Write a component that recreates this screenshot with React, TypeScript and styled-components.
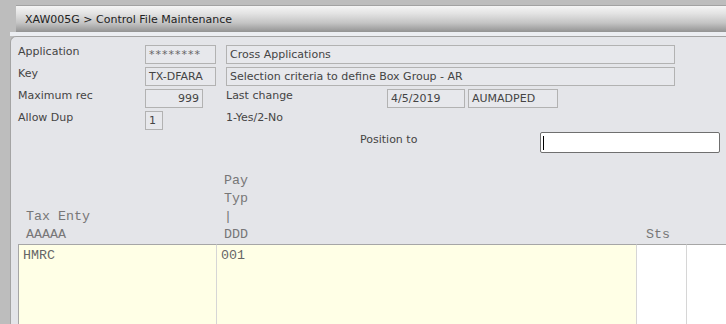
import styled, { createGlobalStyle } from "styled-components";

const GlobalStyle = createGlobalStyle`
  html, body {
    margin: 0;
    padding: 0;
    background: #bdbdbd;
    overflow: hidden;
  }
  body {
    font-family: "DejaVu Sans", Verdana, sans-serif;
    font-size: 11px;
    color: #444;
  }
`;

const Page = styled.div`
  width: 780px;
  padding: 5px 0 0 10px;
`;

const TitleWrap = styled.div`
  padding-left: 6px;
`;

const TitleBar = styled.div`
  height: 26px;
  border-top: 1px solid #a2a2a2;
  background: linear-gradient(to bottom, #f5f5f5 0%, #e2e2e2 30%, #c4c4c4 65%, #939393 100%);
  display: flex;
  align-items: center;
  padding-left: 9px;
  color: #222;
  font-size: 11px;
`;

const Strip = styled.div`
  height: 4px;
  background: #eceef2;
`;

const Panel = styled.div`
  background: #e4e5e9;
  border-top: 1px solid #a4a4a4;
  border-left: 1px solid #a4a4a4;
  border-top-left-radius: 6px;
  padding: 8px 0 0 7px;
`;

const Form = styled.div`
  display: grid;
  grid-template-columns: 127px 81px 1fr;
  grid-auto-rows: 22px;
`;

const Label = styled.div`
  line-height: 14px;
  color: #444;
  white-space: nowrap;
`;

const Box = styled.div<{ $w: number; $right?: boolean; $muted?: boolean }>`
  box-sizing: border-box;
  width: ${(p) => p.$w}px;
  height: 19px;
  line-height: 17px;
  border: 1px solid #b2b2b2;
  background: #e7e8ec;
  padding: 0 3px;
  text-align: ${(p) => (p.$right ? "right" : "left")};
  color: ${(p) => (p.$muted ? "#666" : "#444")};
  letter-spacing: ${(p) => (p.$muted ? "1px" : "0")};
  white-space: nowrap;
  overflow: hidden;
`;

const Inline = styled.div`
  display: flex;
  align-items: flex-start;
`;

const InlineLabel = styled(Label)<{ $w: number }>`
  width: ${(p) => p.$w}px;
`;

const Gap = styled.div<{ $w: number }>`
  width: ${(p) => p.$w}px;
`;

const PositionRow = styled.div`
  height: 22px;
  display: flex;
  align-items: flex-start;
  padding-left: 342px;
`;

const PositionInput = styled.div`
  box-sizing: border-box;
  width: 180px;
  height: 21px;
  margin-top: -1px;
  background: #fff;
  border: 1px solid #6f6f6f;
  border-radius: 2px;
  padding: 3px 0 0 2px;
`;

const Caret = styled.span`
  display: block;
  width: 1px;
  height: 14px;
  background: #000;
`;

const Table = styled.div`
  display: grid;
  grid-template-columns: 198px 420px 50px 1fr;
  font-family: "Liberation Mono", "Courier New", monospace;
  font-size: 13.33px;
  line-height: 18px;
`;

const HeadCell = styled.div<{ $pad?: number }>`
  height: 89px;
  display: flex;
  flex-direction: column;
  justify-content: flex-end;
  padding-left: ${(p) => p.$pad ?? 8}px;
  color: #777;
  white-space: pre;
`;

const BodyCell = styled.div<{ $yellow?: boolean; $first?: boolean }>`
  height: 100px;
  border-top: 1px solid #a6a6a6;
  border-left: 1px solid ${(p) => (p.$first ? "#a6a6a6" : "#d6d6d6")};
  background: ${(p) => (p.$yellow ? "#ffffe6" : "#ffffff")};
  padding: 2px 0 0 4px;
  color: #666;
`;

export default function App() {
  return (
    <>
      <GlobalStyle />
      <Page>
        <TitleWrap>
          <TitleBar>XAW005G &gt; Control File Maintenance</TitleBar>
        </TitleWrap>
        <Strip />
        <Panel>
          <Form>
            <Label>Application</Label>
            <Box $w={71} $muted>********</Box>
            <Box $w={449}>Cross Applications</Box>

            <Label>Key</Label>
            <Box $w={71}>TX-DFARA</Box>
            <Box $w={449}>Selection criteria to define Box Group - AR</Box>

            <Label>Maximum rec</Label>
            <Box $w={58} $right>999</Box>
            <Inline>
              <InlineLabel $w={161}>Last change</InlineLabel>
              <Box $w={78}>4/5/2019</Box>
              <Gap $w={3} />
              <Box $w={90}>AUMADPED</Box>
            </Inline>

            <Label>Allow Dup</Label>
            <Box $w={18}>1</Box>
            <Label>1-Yes/2-No</Label>
          </Form>

          <PositionRow>
            <InlineLabel $w={180}>Position to</InlineLabel>
            <PositionInput>
              <Caret />
            </PositionInput>
          </PositionRow>

          <Table>
            <HeadCell>{"Tax Enty\nAAAAA"}</HeadCell>
            <HeadCell>{"Pay\nTyp\n|\nDDD"}</HeadCell>
            <HeadCell $pad={10}>Sts</HeadCell>
            <HeadCell />

            <BodyCell $yellow $first>HMRC</BodyCell>
            <BodyCell $yellow>001</BodyCell>
            <BodyCell />
            <BodyCell />
          </Table>
        </Panel>
      </Page>
    </>
  );
}
